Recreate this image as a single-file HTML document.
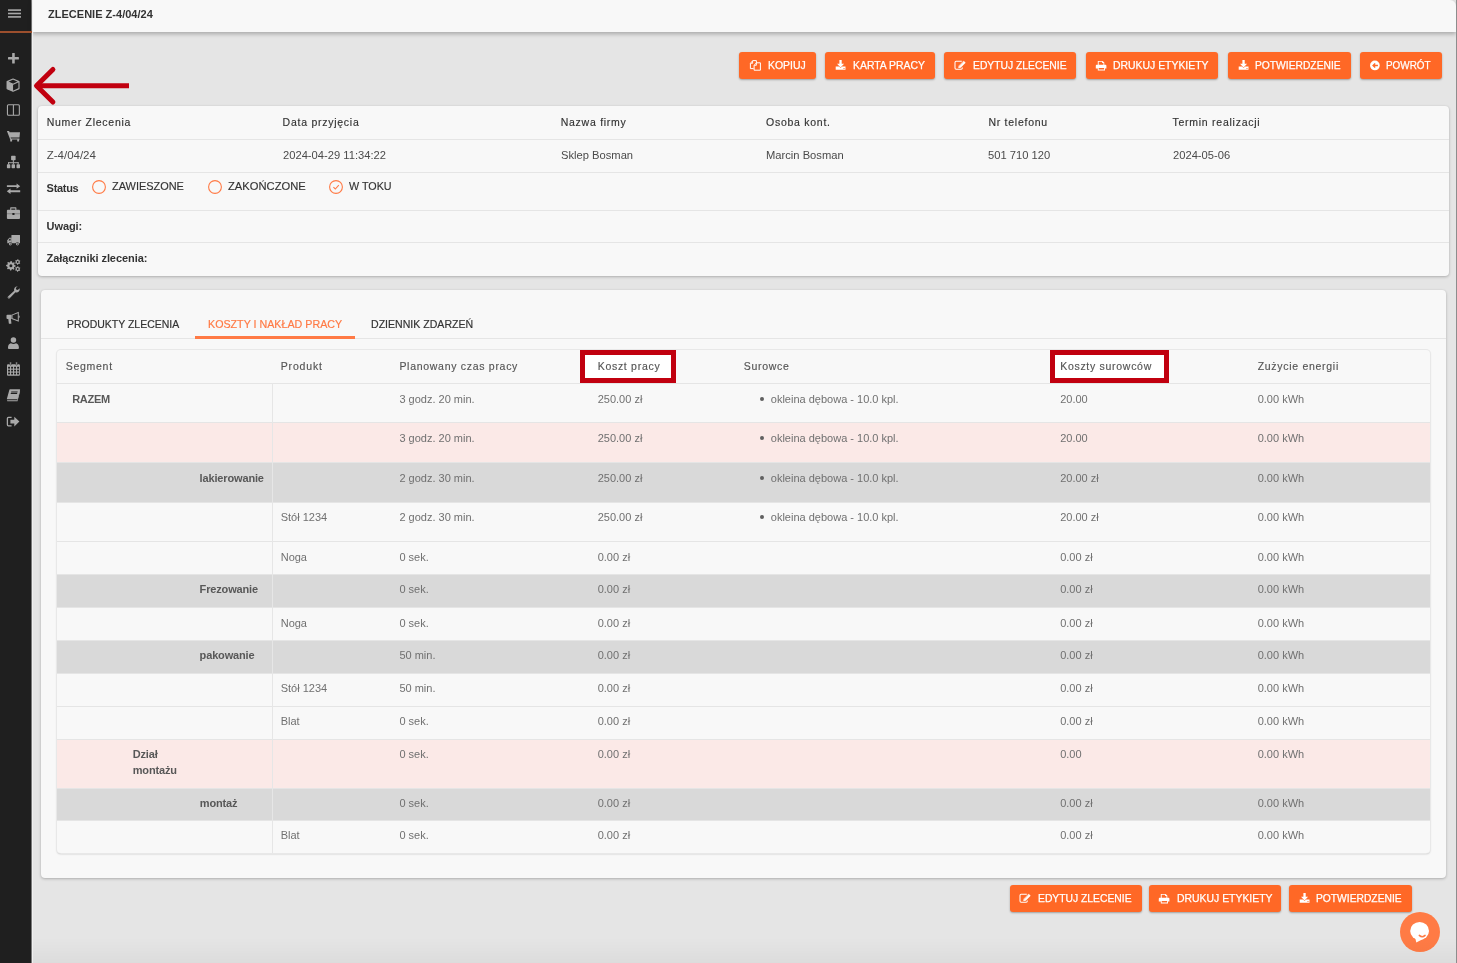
<!DOCTYPE html><html><head><meta charset="utf-8"><style>
*{margin:0;padding:0;box-sizing:border-box}
html,body{width:1457px;height:963px;overflow:hidden}
body{background:#e5e5e5;font-family:"Liberation Sans",sans-serif;position:relative;color:#333}
#sidebar{position:absolute;left:0;top:0;width:31px;height:963px;background:#1f1f1f}
#sbline{position:absolute;left:31px;top:0;width:1px;height:963px;background:#7a7a7a}#sbline2{position:absolute;left:32px;top:0;width:1px;height:963px;background:#f0f0f0;z-index:2}
#hdr{position:absolute;left:32px;top:0;width:1424px;height:32px;background:#f8f8f8;box-shadow:0 2px 4px rgba(0,0,0,.27);border-top-right-radius:6px}
#redge{position:absolute;left:1456px;top:0;width:1px;height:963px;background:#8d8d8d}
.btn{position:absolute;height:27px;background:#ff6826;border-radius:3px;box-shadow:0 1px 2px rgba(0,0,0,.3)}
svg{position:absolute;overflow:visible}
.card{position:absolute;background:#f8f8f8;border-radius:4px;box-shadow:0 1px 3px rgba(0,0,0,.24),0 0 2px rgba(0,0,0,.07)}
.hl{position:absolute;height:1px;background:#e5e5e5}
.vl{position:absolute;width:1px;background:#e6e6e6}
.x{position:absolute;white-space:nowrap}
</style></head><body>
<div id="wrap" style="position:absolute;left:0;top:0;width:1457px;height:963px;will-change:transform">
<div id="sidebar"></div><div id="sbline"></div><div id="hdr"></div><div id="sbline2"></div><div id="redge"></div>
<svg style="left:0;top:0" width="31" height="32"><g fill="#a9a9a9"><rect x="8" y="9.3" width="13" height="1.6"/><rect x="8" y="12.7" width="13" height="1.6"/><rect x="8" y="16.1" width="13" height="1.6"/></g></svg>
<div style="position:absolute;left:0;top:31px;width:32px;height:2px;background:#9c4f2d;z-index:3"></div>
<svg style="left:0;top:0" width="31" height="440" viewBox="0 0 31 440"><g fill="#a9a9a9"><rect x="8" y="56.9" width="10.9" height="2.6" rx=".5"/><rect x="12.15" y="52.9" width="2.6" height="10.6" rx=".5"/><path d="M7 81.6L13.05 84.3V91.3L7 88.6Z"/><path d="M13.05 79L19 81.6V88.6L13.05 91.2L7.1 88.6V81.6Z M13.05 84.3L19 81.6 M13.05 84.3L7.1 81.6" fill="none" stroke="#a9a9a9" stroke-width="1.15" stroke-linejoin="round"/><rect x="7.45" y="104.75" width="11.9" height="10.5" rx="1" fill="none" stroke="#a9a9a9" stroke-width="1.1"/><rect x="12.85" y="105" width="1.1" height="10"/><path d="M6.9 130.9h2.2l0.5 1.3H20l-0.5 5.4H10.6l.3 .9h8.6v1.1H10.2z"/><rect x="10.2" y="139" width="1.9" height="2.6" rx=".4"/><rect x="17.2" y="139" width="1.9" height="2.6" rx=".4"/><rect x="11.1" y="155.8" width="4.5" height="4.4" rx=".7"/><rect x="12.85" y="160" width="1" height="4.3"/><rect x="8.1" y="162.2" width="10.5" height="1"/><rect x="8.05" y="162.2" width="1" height="2.2"/><rect x="17.65" y="162.2" width="1" height="2.2"/><rect x="6.9" y="164.2" width="3.4" height="4" rx=".7"/><rect x="11.6" y="164.2" width="3.4" height="4" rx=".7"/><rect x="16.5" y="164.2" width="3.5" height="4" rx=".7"/><path d="M6.9 185.3H16.6V183.5L20.2 186.15L16.6 188.8V187.1H6.9z"/><path d="M20.2 190.3H10.5V188.6L6.8 191.25L10.5 193.9V192.2H20.2z"/><path d="M10.2 210V207.9a.6.6 0 0 1 .6-.6h5a.6.6 0 0 1 .6.6V210h-1.1V208.4h-4V210z"/><rect x="6.9" y="209.8" width="13.1" height="9.1" rx=".9"/><rect x="6.9" y="213.6" width="13.1" height=".55" fill="#1f1f1f" opacity=".55"/><rect x="12.4" y="213.1" width="2.1" height="1.9" rx=".3" fill="#1f1f1f"/><rect x="11.4" y="234.9" width="8.6" height="8.4" rx=".3"/><path d="M7.3 243.3V240.2L9.3 237.7H11.6V243.3z"/><path d="M8.4 240.4L9.6 238.8H10.6V240.4z" fill="#1f1f1f"/><circle cx="10.3" cy="244.1" r="1.9" fill="#1f1f1f"/><circle cx="17.4" cy="244.1" r="1.9" fill="#1f1f1f"/><circle cx="10.3" cy="244.1" r="1.45"/><circle cx="17.4" cy="244.1" r="1.45"/><circle cx="10.3" cy="244.1" r=".55" fill="#1f1f1f"/><circle cx="17.4" cy="244.1" r=".55" fill="#1f1f1f"/><path d="M10.66 261.01 L11.60 261.05 L12.11 262.41 L12.75 262.71 L14.12 262.24 L14.76 262.94 L14.15 264.26 L14.39 264.93 L15.69 265.56 L15.65 266.50 L14.29 267.01 L13.99 267.65 L14.46 269.02 L13.76 269.66 L12.44 269.05 L11.77 269.29 L11.14 270.59 L10.20 270.55 L9.69 269.19 L9.05 268.89 L7.68 269.36 L7.04 268.66 L7.65 267.34 L7.41 266.67 L6.11 266.04 L6.15 265.10 L7.51 264.59 L7.81 263.95 L7.34 262.58 L8.04 261.94 L9.36 262.55 L10.03 262.31Z M12.40 265.80 A1.5 1.5 0 1 0 9.40 265.80 A1.5 1.5 0 1 0 12.40 265.80Z" fill-rule="evenodd"/><path d="M17.52 259.21 L18.25 259.25 L18.58 260.21 L19.02 260.50 L20.03 260.44 L20.35 261.10 L19.70 261.87 L19.66 262.39 L20.21 263.24 L19.81 263.85 L18.81 263.66 L18.34 263.89 L17.88 264.79 L17.15 264.75 L16.82 263.79 L16.38 263.50 L15.37 263.56 L15.05 262.90 L15.70 262.13 L15.74 261.61 L15.19 260.76 L15.59 260.15 L16.59 260.34 L17.06 260.11Z M18.60 262.00 A0.9 0.9 0 1 0 16.80 262.00 A0.9 0.9 0 1 0 18.60 262.00Z" fill-rule="evenodd"/><path d="M17.52 266.21 L18.25 266.25 L18.58 267.21 L19.02 267.50 L20.03 267.44 L20.35 268.10 L19.70 268.87 L19.66 269.39 L20.21 270.24 L19.81 270.85 L18.81 270.66 L18.34 270.89 L17.88 271.79 L17.15 271.75 L16.82 270.79 L16.38 270.50 L15.37 270.56 L15.05 269.90 L15.70 269.13 L15.74 268.61 L15.19 267.76 L15.59 267.15 L16.59 267.34 L17.06 267.11Z M18.60 269.00 A0.9 0.9 0 1 0 16.80 269.00 A0.9 0.9 0 1 0 18.60 269.00Z" fill-rule="evenodd"/><path d="M17.3 286.6a3.1 3.1 0 0 0-3.1 4.1L8 296.5a1.2 1.2 0 0 0 1.7 1.7L15.5 292.2a3.1 3.1 0 0 0 4.1-3.9L17.8 290l-1.6-.5-.4-1.5 1.9-1.7a3.1 3.1 0 0 0-.4-.1z"/><circle cx="8.9" cy="297.3" r=".45" fill="#1f1f1f"/><path d="M18.8 311.8V321.8L11.6 318.9V314.7z M17.8 313.3L12.5 315.3V318.3L17.8 320.3z" fill-rule="evenodd"/><rect x="18.6" y="315.6" width="1" height="2.2" rx=".4"/><path d="M6.5 315.6a.9.9 0 0 1 .9-.9H11.6V319H7.4a.9.9 0 0 1-.9-.9z"/><path d="M8.3 319H10.9L11.4 323.2a.6.6 0 0 1-.6.6H9.4a.6.6 0 0 1-.6-.5z"/><circle cx="13.45" cy="340.1" r="2.75"/><path d="M8 347.4c0-2.4 1.4-3.9 2.9-4.1c1.4.9 3.7.9 5.1 0c1.5.2 2.9 1.7 2.9 4.1v.6a.9.9 0 0 1-.9.9H8.9a.9.9 0 0 1-.9-.9z"/><path d="M7 365.2a1 1 0 0 1 1-1h10.9a1 1 0 0 1 1 1V374.8a1 1 0 0 1-1 1H8a1 1 0 0 1-1-1z"/><rect x="8.10" y="366.80" width="1.9" height="1.8" fill="#1f1f1f"/><rect x="11.10" y="366.80" width="1.9" height="1.8" fill="#1f1f1f"/><rect x="14.10" y="366.80" width="1.9" height="1.8" fill="#1f1f1f"/><rect x="17.10" y="366.80" width="1.9" height="1.8" fill="#1f1f1f"/><rect x="8.10" y="369.70" width="1.9" height="1.8" fill="#1f1f1f"/><rect x="11.10" y="369.70" width="1.9" height="1.8" fill="#1f1f1f"/><rect x="14.10" y="369.70" width="1.9" height="1.8" fill="#1f1f1f"/><rect x="17.10" y="369.70" width="1.9" height="1.8" fill="#1f1f1f"/><rect x="8.10" y="372.60" width="1.9" height="1.8" fill="#1f1f1f"/><rect x="11.10" y="372.60" width="1.9" height="1.8" fill="#1f1f1f"/><rect x="14.10" y="372.60" width="1.9" height="1.8" fill="#1f1f1f"/><rect x="17.10" y="372.60" width="1.9" height="1.8" fill="#1f1f1f"/><rect x="9.8" y="362" width="1.5" height="3.2" rx=".6" stroke="#1f1f1f" stroke-width=".5"/><rect x="15.8" y="362" width="1.5" height="3.2" rx=".6" stroke="#1f1f1f" stroke-width=".5"/><path d="M10 389.3H19.6a.5.5 0 0 1 .5.6L17.7 399.2H7.3a.4.4 0 0 1-.4-.5L9.4 389.8a.6.6 0 0 1 .6-.5z"/><path d="M11.3 391.4h6.4l-.3 1h-6.4z M10.9 393.1h6.4l-.3 .9h-6.4z" fill="#1f1f1f"/><path d="M6.9 399.6L7.3 401.3H17.5L20.1 391.2L19.6 390.6L17.2 400.3H7.3z"/><path d="M11.6 417.4H8.4a1 1 0 0 0-1 1V424.8a1 1 0 0 0 1 1H11.6" fill="none" stroke="#a9a9a9" stroke-width="1.3"/><path d="M10.4 419.7H14.3V416.8L19.4 421.6L14.3 426.4V423.5H10.4z"/></g></svg>
<svg style="left:0;top:0" width="140" height="120"><g stroke="#c1000f" stroke-width="5" fill="none"><path d="M129 85.7H38" stroke-linecap="butt"/><path d="M52.9 69.4L36.5 85.7L52.9 102" stroke-linecap="round" stroke-linejoin="round"/></g></svg>
<div class="x" style="left:48px;top:8.09px;font-size:11.5px;line-height:12.85px;color:#333;font-weight:bold;letter-spacing:0px;transform:scaleX(0.959);transform-origin:0 0;">ZLECENIE Z-4/04/24</div>
<div class="btn" style="left:739px;top:52px;width:77px"></div><svg style="left:746px;top:56px" width="20" height="20" viewBox="0 0 20 20"><g fill="none" stroke="#ffffff" stroke-width="1" stroke-linejoin="round"><path d="M6.6 4.6H10.4V6.9 M4.4 12.6V7.4L6.6 4.8 M4.4 12.6H7.6"/><path d="M10.4 6.8H14.4V14.2H8.1V9.4L10.4 6.8Z"/><path d="M6.6 4.8V7.3H4.5 M10.4 6.8V9.3H8.1" stroke-width=".9"/></g></svg><div class="x" style="left:767.6px;top:59.34px;font-size:11px;line-height:12.29px;color:#fff;font-weight:normal;letter-spacing:0px;transform:scaleX(0.949);transform-origin:0 0;-webkit-text-stroke:.25px #fff">KOPIUJ</div>
<div class="btn" style="left:825px;top:52px;width:110px"></div><svg style="left:831px;top:56px" width="20" height="20" viewBox="0 0 20 20"><g fill="#ffffff"><path d="M8.4 4h2.3v3.7h2.4L9.55 11.6L6 7.7h2.4z"/><path d="M4.7 10.6H8.1L9.55 12.1L11 10.6H14.5V13.8H4.7z"/><circle cx="12.7" cy="12.5" r=".45" fill="#ff6826"/><circle cx="13.7" cy="12.5" r=".45" fill="#ff6826"/></g></svg><div class="x" style="left:852.7px;top:59.34px;font-size:11px;line-height:12.29px;color:#fff;font-weight:normal;letter-spacing:0px;transform:scaleX(0.947);transform-origin:0 0;-webkit-text-stroke:.25px #fff">KARTA PRACY</div>
<div class="btn" style="left:944px;top:52px;width:132px"></div><svg style="left:951px;top:56px" width="20" height="20" viewBox="0 0 20 20"><g fill="none" stroke="#ffffff" stroke-width="1.05"><path d="M11.3 11.4V12.1a1.1 1.1 0 0 1-1.1 1.1H5.1A1.1 1.1 0 0 1 4 12.1V6.4a1.1 1.1 0 0 1 1.1-1.1H10.8"/></g><path d="M7.3 11.9L7.7 9.7L12.6 4.8L14.6 6.8L9.7 11.7z" fill="#ffffff"/><path d="M8.1 10.2L12.5 5.8" stroke="#ff6826" stroke-width=".5"/></svg><div class="x" style="left:972.7px;top:59.34px;font-size:11px;line-height:12.29px;color:#fff;font-weight:normal;letter-spacing:0px;transform:scaleX(0.939);transform-origin:0 0;-webkit-text-stroke:.25px #fff">EDYTUJ ZLECENIE</div>
<div class="btn" style="left:1086px;top:52px;width:132px"></div><svg style="left:1092px;top:56px" width="20" height="20" viewBox="0 0 20 20"><g fill="#ffffff"><path d="M5.8 4.9H10.6L12.3 6.5V9H11.4V7H10.1V5.8H6.7V9H5.8z"/><path d="M4.6 8.8H13.5a.9.9 0 0 1 .9.9V12.6H13V14.5H5.8V12.6H3.8V9.7a.9.9 0 0 1 .8-.9z M6.7 11.9V13.6H12.1V11.9z" fill-rule="evenodd"/></g></svg><div class="x" style="left:1112.7px;top:59.34px;font-size:11px;line-height:12.29px;color:#fff;font-weight:normal;letter-spacing:0px;transform:scaleX(0.947);transform-origin:0 0;-webkit-text-stroke:.25px #fff">DRUKUJ ETYKIETY</div>
<div class="btn" style="left:1228px;top:52px;width:123px"></div><svg style="left:1234px;top:56px" width="20" height="20" viewBox="0 0 20 20"><g fill="#ffffff"><path d="M8.4 4h2.3v3.7h2.4L9.55 11.6L6 7.7h2.4z"/><path d="M4.7 10.6H8.1L9.55 12.1L11 10.6H14.5V13.8H4.7z"/><circle cx="12.7" cy="12.5" r=".45" fill="#ff6826"/><circle cx="13.7" cy="12.5" r=".45" fill="#ff6826"/></g></svg><div class="x" style="left:1254.6px;top:59.34px;font-size:11px;line-height:12.29px;color:#fff;font-weight:normal;letter-spacing:0px;transform:scaleX(0.934);transform-origin:0 0;-webkit-text-stroke:.25px #fff">POTWIERDZENIE</div>
<div class="btn" style="left:1360px;top:52px;width:82px"></div><svg style="left:1366px;top:56px" width="20" height="20" viewBox="0 0 20 20"><circle cx="8.9" cy="9.45" r="4.85" fill="#ffffff"/><path d="M6.1 9.45L8.7 6.9L9.7 7.9L8.7 8.75H11.9V10.15H8.7L9.7 11L8.7 12z" fill="#ff6826"/></svg><div class="x" style="left:1386.2px;top:59.34px;font-size:11px;line-height:12.29px;color:#fff;font-weight:normal;letter-spacing:0px;transform:scaleX(0.9);transform-origin:0 0;-webkit-text-stroke:.25px #fff">POWRÓT</div>
<div class="card" style="left:38px;top:106px;width:1411px;height:170px"></div>
<div class="hl" style="left:38px;top:139px;width:1411px"></div>
<div class="hl" style="left:38px;top:172px;width:1411px"></div>
<div class="hl" style="left:38px;top:210px;width:1411px"></div>
<div class="hl" style="left:38px;top:242px;width:1411px"></div>
<div class="x" style="left:46.7px;top:116.50px;font-size:10.5px;line-height:11.73px;color:#333;font-weight:normal;letter-spacing:0.74px;-webkit-text-stroke:.15px #333">Numer Zlecenia</div>
<div class="x" style="left:282.6px;top:116.50px;font-size:10.5px;line-height:11.73px;color:#333;font-weight:normal;letter-spacing:0.74px;-webkit-text-stroke:.15px #333">Data przyjęcia</div>
<div class="x" style="left:560.7px;top:116.50px;font-size:10.5px;line-height:11.73px;color:#333;font-weight:normal;letter-spacing:0.74px;-webkit-text-stroke:.15px #333">Nazwa firmy</div>
<div class="x" style="left:766px;top:116.50px;font-size:10.5px;line-height:11.73px;color:#333;font-weight:normal;letter-spacing:0.74px;-webkit-text-stroke:.15px #333">Osoba kont.</div>
<div class="x" style="left:988.4px;top:116.50px;font-size:10.5px;line-height:11.73px;color:#333;font-weight:normal;letter-spacing:0.74px;-webkit-text-stroke:.15px #333">Nr telefonu</div>
<div class="x" style="left:1172.5px;top:116.50px;font-size:10.5px;line-height:11.73px;color:#333;font-weight:normal;letter-spacing:0.74px;-webkit-text-stroke:.15px #333">Termin realizacji</div>
<div class="x" style="left:46.7px;top:148.59px;font-size:11.5px;line-height:12.85px;color:#4a4a4a;font-weight:normal;letter-spacing:0px;">Z-4/04/24</div>
<div class="x" style="left:282.6px;top:148.59px;font-size:11.5px;line-height:12.85px;color:#4a4a4a;font-weight:normal;letter-spacing:0px;transform:scaleX(0.972);transform-origin:0 0;">2024-04-29 11:34:22</div>
<div class="x" style="left:560.7px;top:148.59px;font-size:11.5px;line-height:12.85px;color:#4a4a4a;font-weight:normal;letter-spacing:0px;transform:scaleX(0.972);transform-origin:0 0;">Sklep Bosman</div>
<div class="x" style="left:766px;top:148.59px;font-size:11.5px;line-height:12.85px;color:#4a4a4a;font-weight:normal;letter-spacing:0px;transform:scaleX(0.972);transform-origin:0 0;">Marcin Bosman</div>
<div class="x" style="left:988.4px;top:148.59px;font-size:11.5px;line-height:12.85px;color:#4a4a4a;font-weight:normal;letter-spacing:0px;transform:scaleX(0.972);transform-origin:0 0;">501 710 120</div>
<div class="x" style="left:1172.5px;top:148.59px;font-size:11.5px;line-height:12.85px;color:#4a4a4a;font-weight:normal;letter-spacing:0px;transform:scaleX(0.972);transform-origin:0 0;">2024-05-06</div>
<div class="x" style="left:46.6px;top:181.64px;font-size:11px;line-height:12.29px;color:#333;font-weight:bold;letter-spacing:-0.3px;">Status</div>
<svg style="left:91.2px;top:178.6px" width="16" height="16"><circle cx="8" cy="8" r="6.4" fill="none" stroke="#ff7a45" stroke-width="1.1"/></svg>
<div class="x" style="left:111.6px;top:179.79px;font-size:11.5px;line-height:12.85px;color:#333;font-weight:normal;letter-spacing:0px;transform:scaleX(0.951);transform-origin:0 0;-webkit-text-stroke:.15px #333">ZAWIESZONE</div>
<svg style="left:207.2px;top:178.6px" width="16" height="16"><circle cx="8" cy="8" r="6.4" fill="none" stroke="#ff7a45" stroke-width="1.1"/></svg>
<div class="x" style="left:227.9px;top:179.79px;font-size:11.5px;line-height:12.85px;color:#333;font-weight:normal;letter-spacing:0px;transform:scaleX(0.973);transform-origin:0 0;-webkit-text-stroke:.15px #333">ZAKOŃCZONE</div>
<svg style="left:327.7px;top:178.6px" width="16" height="16"><circle cx="8" cy="8" r="6.4" fill="none" stroke="#ff7a45" stroke-width="1.1"/></svg>
<div class="x" style="left:348.5px;top:179.79px;font-size:11.5px;line-height:12.85px;color:#333;font-weight:normal;letter-spacing:0px;transform:scaleX(0.935);transform-origin:0 0;-webkit-text-stroke:.15px #333">W TOKU</div>
<svg style="left:327.7px;top:178.6px" width="16" height="16"><path d="M5.4 8.2L7.3 10L10.8 6.2" fill="none" stroke="#ff7a45" stroke-width="1.1"/></svg>
<div class="x" style="left:46.6px;top:219.54px;font-size:11px;line-height:12.29px;color:#333;font-weight:bold;letter-spacing:-0.1px;">Uwagi:</div>
<div class="x" style="left:46.6px;top:252.24px;font-size:11px;line-height:12.29px;color:#333;font-weight:bold;letter-spacing:-0.07px;">Załączniki zlecenia:</div>
<div class="card" style="left:41px;top:290px;width:1405px;height:588px"></div>
<div class="hl" style="left:41px;top:338px;width:1405px"></div>
<div class="x" style="left:67px;top:317.59px;font-size:11.5px;line-height:12.85px;color:#333;font-weight:normal;letter-spacing:0px;transform:scaleX(0.911);transform-origin:0 0;-webkit-text-stroke:.2px #333">PRODUKTY ZLECENIA</div>
<div class="x" style="left:208.3px;top:317.59px;font-size:11.5px;line-height:12.85px;color:#ff7a45;font-weight:normal;letter-spacing:0px;transform:scaleX(0.93);transform-origin:0 0;-webkit-text-stroke:.2px #ff7a45">KOSZTY I NAKŁAD PRACY</div>
<div class="x" style="left:370.9px;top:317.59px;font-size:11.5px;line-height:12.85px;color:#333;font-weight:normal;letter-spacing:0px;transform:scaleX(0.919);transform-origin:0 0;-webkit-text-stroke:.2px #333">DZIENNIK ZDARZEŃ</div>
<div style="position:absolute;left:195px;top:336px;width:160px;height:2.5px;background:#ff7a45"></div>
<div class="card" style="left:57px;top:350px;width:1373px;height:503px;border-radius:4px;box-shadow:0 0 0 1px #e8e8e8, 0 1px 2px rgba(0,0,0,.25)"></div>
<div class="hl" style="left:57px;top:383px;width:1373px"></div>
<div style="position:absolute;left:57px;top:422px;width:1373px;height:40px;background:#fbe9e7"></div>
<div class="hl" style="left:57px;top:422px;width:1373px"></div>
<div style="position:absolute;left:57px;top:462px;width:1373px;height:40px;background:#d9d9d9"></div>
<div class="hl" style="left:57px;top:462px;width:1373px"></div>
<div class="hl" style="left:57px;top:502px;width:1373px"></div>
<div class="hl" style="left:57px;top:541px;width:1373px"></div>
<div style="position:absolute;left:57px;top:574px;width:1373px;height:33px;background:#d9d9d9"></div>
<div class="hl" style="left:57px;top:574px;width:1373px"></div>
<div class="hl" style="left:57px;top:607px;width:1373px"></div>
<div style="position:absolute;left:57px;top:640px;width:1373px;height:33px;background:#d9d9d9"></div>
<div class="hl" style="left:57px;top:640px;width:1373px"></div>
<div class="hl" style="left:57px;top:673px;width:1373px"></div>
<div class="hl" style="left:57px;top:706px;width:1373px"></div>
<div style="position:absolute;left:57px;top:739px;width:1373px;height:49px;background:#fbe9e7"></div>
<div class="hl" style="left:57px;top:739px;width:1373px"></div>
<div style="position:absolute;left:57px;top:788px;width:1373px;height:32px;background:#d9d9d9"></div>
<div class="hl" style="left:57px;top:788px;width:1373px"></div>
<div class="hl" style="left:57px;top:820px;width:1373px"></div>
<div class="vl" style="left:272px;top:383px;height:470px"></div>
<div style="position:absolute;left:580px;top:350px;width:96px;height:33px;border:5px solid #c1000f;background:#fff"></div>
<div style="position:absolute;left:1050px;top:350px;width:119px;height:33px;border:5px solid #c1000f;background:#fff"></div>
<div class="x" style="left:65.8px;top:360.50px;font-size:10.5px;line-height:11.73px;color:#555;font-weight:normal;letter-spacing:0.71px;-webkit-text-stroke:.15px #555">Segment</div>
<div class="x" style="left:280.7px;top:360.50px;font-size:10.5px;line-height:11.73px;color:#555;font-weight:normal;letter-spacing:0.86px;-webkit-text-stroke:.15px #555">Produkt</div>
<div class="x" style="left:399.4px;top:360.50px;font-size:10.5px;line-height:11.73px;color:#555;font-weight:normal;letter-spacing:0.71px;-webkit-text-stroke:.15px #555">Planowany czas pracy</div>
<div class="x" style="left:597.7px;top:360.50px;font-size:10.5px;line-height:11.73px;color:#555;font-weight:normal;letter-spacing:0.71px;-webkit-text-stroke:.15px #555">Koszt pracy</div>
<div class="x" style="left:743.7px;top:360.50px;font-size:10.5px;line-height:11.73px;color:#555;font-weight:normal;letter-spacing:0.71px;-webkit-text-stroke:.15px #555">Surowce</div>
<div class="x" style="left:1060.2px;top:360.50px;font-size:10.5px;line-height:11.73px;color:#555;font-weight:normal;letter-spacing:0.71px;-webkit-text-stroke:.15px #555">Koszty surowców</div>
<div class="x" style="left:1257.7px;top:360.50px;font-size:10.5px;line-height:11.73px;color:#555;font-weight:normal;letter-spacing:0.71px;-webkit-text-stroke:.15px #555">Zużycie energii</div>
<div class="x" style="left:72.2px;top:392.85px;font-size:11px;line-height:12.29px;color:#585858;font-weight:bold;letter-spacing:-0.3px;">RAZEM</div><div class="x" style="left:399.4px;top:392.85px;font-size:11px;line-height:12.29px;color:#707070;font-weight:normal;letter-spacing:0px;">3 godz. 20 min.</div><div class="x" style="left:597.7px;top:392.85px;font-size:11px;line-height:12.29px;color:#707070;font-weight:normal;letter-spacing:0px;">250.00 zł</div><div style="position:absolute;left:759.8px;top:397.2px;width:3.8px;height:3.8px;border-radius:50%;background:#606060"></div><div class="x" style="left:770.8px;top:392.85px;font-size:11px;line-height:12.29px;color:#707070;font-weight:normal;letter-spacing:0px;">okleina dębowa - 10.0 kpl.</div><div class="x" style="left:1060.2px;top:392.85px;font-size:11px;line-height:12.29px;color:#707070;font-weight:normal;letter-spacing:0px;">20.00</div><div class="x" style="left:1257.7px;top:392.85px;font-size:11px;line-height:12.29px;color:#707070;font-weight:normal;letter-spacing:0px;">0.00 kWh</div>
<div class="x" style="left:399.4px;top:432.05px;font-size:11px;line-height:12.29px;color:#707070;font-weight:normal;letter-spacing:0px;">3 godz. 20 min.</div><div class="x" style="left:597.7px;top:432.05px;font-size:11px;line-height:12.29px;color:#707070;font-weight:normal;letter-spacing:0px;">250.00 zł</div><div style="position:absolute;left:759.8px;top:436.4px;width:3.8px;height:3.8px;border-radius:50%;background:#606060"></div><div class="x" style="left:770.8px;top:432.05px;font-size:11px;line-height:12.29px;color:#707070;font-weight:normal;letter-spacing:0px;">okleina dębowa - 10.0 kpl.</div><div class="x" style="left:1060.2px;top:432.05px;font-size:11px;line-height:12.29px;color:#707070;font-weight:normal;letter-spacing:0px;">20.00</div><div class="x" style="left:1257.7px;top:432.05px;font-size:11px;line-height:12.29px;color:#707070;font-weight:normal;letter-spacing:0px;">0.00 kWh</div>
<div class="x" style="left:199.6px;top:471.55px;font-size:11px;line-height:12.29px;color:#585858;font-weight:bold;letter-spacing:-0.15px;">lakierowanie</div><div class="x" style="left:399.4px;top:471.55px;font-size:11px;line-height:12.29px;color:#707070;font-weight:normal;letter-spacing:0px;">2 godz. 30 min.</div><div class="x" style="left:597.7px;top:471.55px;font-size:11px;line-height:12.29px;color:#707070;font-weight:normal;letter-spacing:0px;">250.00 zł</div><div style="position:absolute;left:759.8px;top:475.9px;width:3.8px;height:3.8px;border-radius:50%;background:#606060"></div><div class="x" style="left:770.8px;top:471.55px;font-size:11px;line-height:12.29px;color:#707070;font-weight:normal;letter-spacing:0px;">okleina dębowa - 10.0 kpl.</div><div class="x" style="left:1060.2px;top:471.55px;font-size:11px;line-height:12.29px;color:#707070;font-weight:normal;letter-spacing:0px;">20.00 zł</div><div class="x" style="left:1257.7px;top:471.55px;font-size:11px;line-height:12.29px;color:#707070;font-weight:normal;letter-spacing:0px;">0.00 kWh</div>
<div class="x" style="left:280.7px;top:511.05px;font-size:11px;line-height:12.29px;color:#707070;font-weight:normal;letter-spacing:0px;">Stół 1234</div><div class="x" style="left:399.4px;top:511.05px;font-size:11px;line-height:12.29px;color:#707070;font-weight:normal;letter-spacing:0px;">2 godz. 30 min.</div><div class="x" style="left:597.7px;top:511.05px;font-size:11px;line-height:12.29px;color:#707070;font-weight:normal;letter-spacing:0px;">250.00 zł</div><div style="position:absolute;left:759.8px;top:515.4px;width:3.8px;height:3.8px;border-radius:50%;background:#606060"></div><div class="x" style="left:770.8px;top:511.05px;font-size:11px;line-height:12.29px;color:#707070;font-weight:normal;letter-spacing:0px;">okleina dębowa - 10.0 kpl.</div><div class="x" style="left:1060.2px;top:511.05px;font-size:11px;line-height:12.29px;color:#707070;font-weight:normal;letter-spacing:0px;">20.00 zł</div><div class="x" style="left:1257.7px;top:511.05px;font-size:11px;line-height:12.29px;color:#707070;font-weight:normal;letter-spacing:0px;">0.00 kWh</div>
<div class="x" style="left:280.7px;top:551.25px;font-size:11px;line-height:12.29px;color:#707070;font-weight:normal;letter-spacing:0px;">Noga</div><div class="x" style="left:399.4px;top:551.25px;font-size:11px;line-height:12.29px;color:#707070;font-weight:normal;letter-spacing:0px;">0 sek.</div><div class="x" style="left:597.7px;top:551.25px;font-size:11px;line-height:12.29px;color:#707070;font-weight:normal;letter-spacing:0px;">0.00 zł</div><div class="x" style="left:1060.2px;top:551.25px;font-size:11px;line-height:12.29px;color:#707070;font-weight:normal;letter-spacing:0px;">0.00 zł</div><div class="x" style="left:1257.7px;top:551.25px;font-size:11px;line-height:12.29px;color:#707070;font-weight:normal;letter-spacing:0px;">0.00 kWh</div>
<div class="x" style="left:199.6px;top:583.44px;font-size:11px;line-height:12.29px;color:#585858;font-weight:bold;letter-spacing:-0.15px;">Frezowanie</div><div class="x" style="left:399.4px;top:583.44px;font-size:11px;line-height:12.29px;color:#707070;font-weight:normal;letter-spacing:0px;">0 sek.</div><div class="x" style="left:597.7px;top:583.44px;font-size:11px;line-height:12.29px;color:#707070;font-weight:normal;letter-spacing:0px;">0.00 zł</div><div class="x" style="left:1060.2px;top:583.44px;font-size:11px;line-height:12.29px;color:#707070;font-weight:normal;letter-spacing:0px;">0.00 zł</div><div class="x" style="left:1257.7px;top:583.44px;font-size:11px;line-height:12.29px;color:#707070;font-weight:normal;letter-spacing:0px;">0.00 kWh</div>
<div class="x" style="left:280.7px;top:616.64px;font-size:11px;line-height:12.29px;color:#707070;font-weight:normal;letter-spacing:0px;">Noga</div><div class="x" style="left:399.4px;top:616.64px;font-size:11px;line-height:12.29px;color:#707070;font-weight:normal;letter-spacing:0px;">0 sek.</div><div class="x" style="left:597.7px;top:616.64px;font-size:11px;line-height:12.29px;color:#707070;font-weight:normal;letter-spacing:0px;">0.00 zł</div><div class="x" style="left:1060.2px;top:616.64px;font-size:11px;line-height:12.29px;color:#707070;font-weight:normal;letter-spacing:0px;">0.00 zł</div><div class="x" style="left:1257.7px;top:616.64px;font-size:11px;line-height:12.29px;color:#707070;font-weight:normal;letter-spacing:0px;">0.00 kWh</div>
<div class="x" style="left:199.6px;top:649.25px;font-size:11px;line-height:12.29px;color:#585858;font-weight:bold;letter-spacing:-0.15px;">pakowanie</div><div class="x" style="left:399.4px;top:649.25px;font-size:11px;line-height:12.29px;color:#707070;font-weight:normal;letter-spacing:0px;">50 min.</div><div class="x" style="left:597.7px;top:649.25px;font-size:11px;line-height:12.29px;color:#707070;font-weight:normal;letter-spacing:0px;">0.00 zł</div><div class="x" style="left:1060.2px;top:649.25px;font-size:11px;line-height:12.29px;color:#707070;font-weight:normal;letter-spacing:0px;">0.00 zł</div><div class="x" style="left:1257.7px;top:649.25px;font-size:11px;line-height:12.29px;color:#707070;font-weight:normal;letter-spacing:0px;">0.00 kWh</div>
<div class="x" style="left:280.7px;top:682.34px;font-size:11px;line-height:12.29px;color:#707070;font-weight:normal;letter-spacing:0px;">Stół 1234</div><div class="x" style="left:399.4px;top:682.34px;font-size:11px;line-height:12.29px;color:#707070;font-weight:normal;letter-spacing:0px;">50 min.</div><div class="x" style="left:597.7px;top:682.34px;font-size:11px;line-height:12.29px;color:#707070;font-weight:normal;letter-spacing:0px;">0.00 zł</div><div class="x" style="left:1060.2px;top:682.34px;font-size:11px;line-height:12.29px;color:#707070;font-weight:normal;letter-spacing:0px;">0.00 zł</div><div class="x" style="left:1257.7px;top:682.34px;font-size:11px;line-height:12.29px;color:#707070;font-weight:normal;letter-spacing:0px;">0.00 kWh</div>
<div class="x" style="left:280.7px;top:715.34px;font-size:11px;line-height:12.29px;color:#707070;font-weight:normal;letter-spacing:0px;">Blat</div><div class="x" style="left:399.4px;top:715.34px;font-size:11px;line-height:12.29px;color:#707070;font-weight:normal;letter-spacing:0px;">0 sek.</div><div class="x" style="left:597.7px;top:715.34px;font-size:11px;line-height:12.29px;color:#707070;font-weight:normal;letter-spacing:0px;">0.00 zł</div><div class="x" style="left:1060.2px;top:715.34px;font-size:11px;line-height:12.29px;color:#707070;font-weight:normal;letter-spacing:0px;">0.00 zł</div><div class="x" style="left:1257.7px;top:715.34px;font-size:11px;line-height:12.29px;color:#707070;font-weight:normal;letter-spacing:0px;">0.00 kWh</div>
<div class="x" style="left:132.7px;top:747.64px;font-size:11px;line-height:12.29px;color:#585858;font-weight:bold;letter-spacing:-0.15px;">Dział</div><div class="x" style="left:132.7px;top:764.14px;font-size:11px;line-height:12.29px;color:#585858;font-weight:bold;letter-spacing:-0.15px;">montażu</div><div class="x" style="left:399.4px;top:747.64px;font-size:11px;line-height:12.29px;color:#707070;font-weight:normal;letter-spacing:0px;">0 sek.</div><div class="x" style="left:597.7px;top:747.64px;font-size:11px;line-height:12.29px;color:#707070;font-weight:normal;letter-spacing:0px;">0.00 zł</div><div class="x" style="left:1060.2px;top:747.64px;font-size:11px;line-height:12.29px;color:#707070;font-weight:normal;letter-spacing:0px;">0.00</div><div class="x" style="left:1257.7px;top:747.64px;font-size:11px;line-height:12.29px;color:#707070;font-weight:normal;letter-spacing:0px;">0.00 kWh</div>
<div class="x" style="left:199.8px;top:796.64px;font-size:11px;line-height:12.29px;color:#585858;font-weight:bold;letter-spacing:-0.15px;">montaż</div><div class="x" style="left:399.4px;top:796.64px;font-size:11px;line-height:12.29px;color:#707070;font-weight:normal;letter-spacing:0px;">0 sek.</div><div class="x" style="left:597.7px;top:796.64px;font-size:11px;line-height:12.29px;color:#707070;font-weight:normal;letter-spacing:0px;">0.00 zł</div><div class="x" style="left:1060.2px;top:796.64px;font-size:11px;line-height:12.29px;color:#707070;font-weight:normal;letter-spacing:0px;">0.00 zł</div><div class="x" style="left:1257.7px;top:796.64px;font-size:11px;line-height:12.29px;color:#707070;font-weight:normal;letter-spacing:0px;">0.00 kWh</div>
<div class="x" style="left:280.7px;top:829.25px;font-size:11px;line-height:12.29px;color:#707070;font-weight:normal;letter-spacing:0px;">Blat</div><div class="x" style="left:399.4px;top:829.25px;font-size:11px;line-height:12.29px;color:#707070;font-weight:normal;letter-spacing:0px;">0 sek.</div><div class="x" style="left:597.7px;top:829.25px;font-size:11px;line-height:12.29px;color:#707070;font-weight:normal;letter-spacing:0px;">0.00 zł</div><div class="x" style="left:1060.2px;top:829.25px;font-size:11px;line-height:12.29px;color:#707070;font-weight:normal;letter-spacing:0px;">0.00 zł</div><div class="x" style="left:1257.7px;top:829.25px;font-size:11px;line-height:12.29px;color:#707070;font-weight:normal;letter-spacing:0px;">0.00 kWh</div>
<div class="btn" style="left:1010px;top:885px;width:132px"></div><svg style="left:1016px;top:889px" width="20" height="20" viewBox="0 0 20 20"><g fill="none" stroke="#ffffff" stroke-width="1.05"><path d="M11.3 11.4V12.1a1.1 1.1 0 0 1-1.1 1.1H5.1A1.1 1.1 0 0 1 4 12.1V6.4a1.1 1.1 0 0 1 1.1-1.1H10.8"/></g><path d="M7.3 11.9L7.7 9.7L12.6 4.8L14.6 6.8L9.7 11.7z" fill="#ffffff"/><path d="M8.1 10.2L12.5 5.8" stroke="#ff6826" stroke-width=".5"/></svg><div class="x" style="left:1037.5px;top:892.34px;font-size:11px;line-height:12.29px;color:#fff;font-weight:normal;letter-spacing:0px;transform:scaleX(0.939);transform-origin:0 0;-webkit-text-stroke:.25px #fff">EDYTUJ ZLECENIE</div>
<div class="btn" style="left:1149px;top:885px;width:132px"></div><svg style="left:1155px;top:889px" width="20" height="20" viewBox="0 0 20 20"><g fill="#ffffff"><path d="M5.8 4.9H10.6L12.3 6.5V9H11.4V7H10.1V5.8H6.7V9H5.8z"/><path d="M4.6 8.8H13.5a.9.9 0 0 1 .9.9V12.6H13V14.5H5.8V12.6H3.8V9.7a.9.9 0 0 1 .8-.9z M6.7 11.9V13.6H12.1V11.9z" fill-rule="evenodd"/></g></svg><div class="x" style="left:1176.5px;top:892.34px;font-size:11px;line-height:12.29px;color:#fff;font-weight:normal;letter-spacing:0px;transform:scaleX(0.947);transform-origin:0 0;-webkit-text-stroke:.25px #fff">DRUKUJ ETYKIETY</div>
<div class="btn" style="left:1289px;top:885px;width:123px"></div><svg style="left:1295px;top:889px" width="20" height="20" viewBox="0 0 20 20"><g fill="#ffffff"><path d="M8.4 4h2.3v3.7h2.4L9.55 11.6L6 7.7h2.4z"/><path d="M4.7 10.6H8.1L9.55 12.1L11 10.6H14.5V13.8H4.7z"/><circle cx="12.7" cy="12.5" r=".45" fill="#ff6826"/><circle cx="13.7" cy="12.5" r=".45" fill="#ff6826"/></g></svg><div class="x" style="left:1316.3px;top:892.34px;font-size:11px;line-height:12.29px;color:#fff;font-weight:normal;letter-spacing:0px;transform:scaleX(0.934);transform-origin:0 0;-webkit-text-stroke:.25px #fff">POTWIERDZENIE</div>
<div style="position:absolute;left:1399.7px;top:912.4px;width:40px;height:40px;border-radius:50%;background:#ff7b45"></div>
<svg style="left:1390px;top:910px" width="60" height="50" viewBox="1390 910 60 50"><ellipse cx="1419.6" cy="930.9" rx="9.4" ry="8.9" fill="#fff"/><path d="M1415.2 937.5L1416.3 942.6L1424 938.6z" fill="#fff"/><path d="M1419.3 935.4Q1422.2 938.2 1425.1 935.4" stroke="#ff7b45" stroke-width="1.5" fill="none" stroke-linecap="round"/></svg>
<div style="position:absolute;left:32px;top:938px;width:1424px;height:25px;background:linear-gradient(rgba(0,0,0,0),rgba(0,0,0,.035))"></div>
</div></body></html>
